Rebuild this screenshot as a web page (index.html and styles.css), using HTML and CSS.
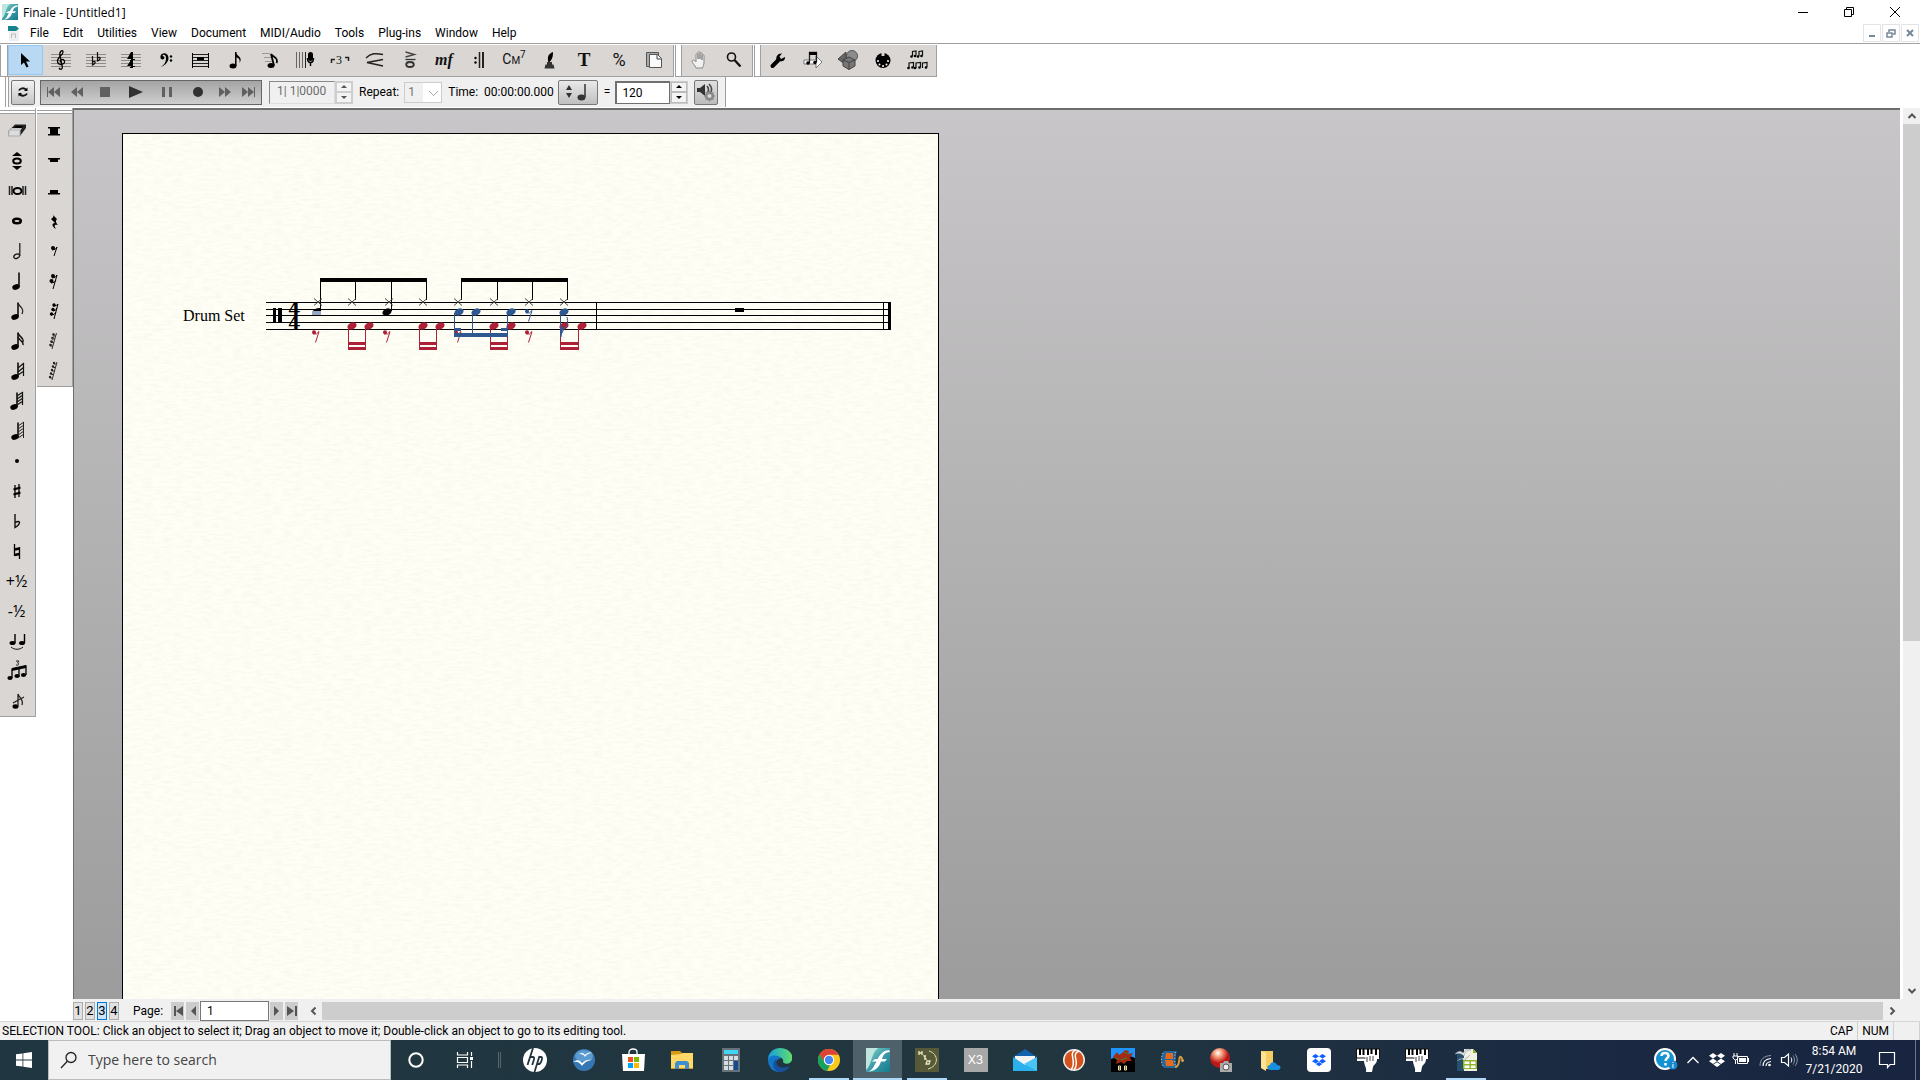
FILE: index.html
```html
<!DOCTYPE html>
<html lang="en">
<head>
<meta charset="utf-8">
<title>Finale - [Untitled1]</title>
<link rel="stylesheet" href="styles.css">
</head>
<body>
<svg class="defs" width="0" height="0" aria-hidden="true">
  <defs>
    <symbol id="head" viewBox="-6 -5 12 10" overflow="visible"><ellipse rx="4.8" ry="3.4" transform="rotate(-25)"/></symbol>
    <symbol id="cross" viewBox="-5 -5 10 10" overflow="visible"><path d="M-4-3.5 4 3.5M4-3.5-4 3.5" stroke="#444" fill="none"/></symbol>
    <symbol id="rest8" viewBox="0 0 8 13" overflow="visible"><circle cx="2" cy="2.3" r="2"/><path d="M1 4Q5 5 7 1.500L3.500 12.500" fill="none" stroke="currentColor"/></symbol>
    <symbol id="staff" viewBox="0 0 24 24"><path d="M2 6.500h20M2 9.500h20M2 12.500h20M2 15.500h20M2 18.500h20" stroke="#8d8a88" fill="none"/></symbol>
    <symbol id="note" viewBox="0 0 24 24"><ellipse cx="9" cy="18" rx="3.800" ry="2.700" transform="rotate(-20 9 18)"/><path d="M12 18V3.500" stroke="#000" stroke-width="1.500"/></symbol>
    <symbol id="dropbox" viewBox="0 0 16 16"><path d="M4 1 8 3.700 4 6.400 0 3.700zM12 1l4 2.700-4 2.700-4-2.700zM4 6.600 8 9.300 4 12 0 9.300zM12 6.600l4 2.700L12 12 8 9.300zM8 10.200l3.700 2.400L8 15l-3.700-2.400z"/></symbol>
    <linearGradient id="teal" x2="1" y2="1"><stop stop-color="#8ee0d0"/><stop offset=".5" stop-color="#3f9ba8"/><stop offset="1" stop-color="#147b91"/></linearGradient>
    <symbol id="finale" viewBox="0 0 24 24"><path fill="url(#teal)" d="M0 0h24v24H0z"/><path fill="#bfe6de" d="M0 0h12C5 5 6 17 0 22z"/><path fill="#fff" d="M2 24c9-3 8-21 21-22l1 2c-6 0-7 4-8 7h5l-2 2.500h-4c-2 6-5 9-13 10.500zM6 13.500l3-2.500h4l-1 2.500z"/></symbol>
    <symbol id="piano" viewBox="0 0 24 24"><path fill="#fff" d="M1 1h22v10h-2c0 5-3 5-4 8l-1 5h-6c1-4-2-7-2-11H1z"/><path d="M.500 1v9h9M.500 1h23v9" fill="none" stroke="#111"/><path d="M4 1v6M7.500 1v6M12 1v6M15.500 1v5M20 1v6" stroke="#000" stroke-width="2"/><path d="M11 9v5M14 8v5M17 8v5" stroke="#444"/></symbol>
  </defs>
</svg>

<div class="app">
  <header class="titlebar">
    <svg class="app-icon" viewBox="0 0 24 24"><use href="#finale"/></svg>
    <h1 class="app-title">Finale - [Untitled1]</h1>
    <div class="window-buttons">
      <button aria-label="Minimize"><svg viewBox="0 0 12 12"><path d="M1 6.500h10"/></svg></button>
      <button aria-label="Restore"><svg viewBox="0 0 12 12"><path d="M1.500 3.500h7v7h-7zM3.500 3V1.500h7v7H9"/></svg></button>
      <button aria-label="Close"><svg viewBox="0 0 12 12"><path d="M1 1l10 10M11 1 1 11"/></svg></button>
    </div>
  </header>

  <nav class="menubar">
    <svg class="doc-icon" viewBox="0 0 14 16"><path fill="#eee" d="M2 4h10v12H2z"/><path fill="#16818f" d="M1 1h8l3 2.500L9 6H1z"/><path d="M4.500 13V9h4v4" stroke="#bbb" fill="none"/></svg>
    <button>File</button><button>Edit</button><button>Utilities</button><button>View</button><button>Document</button><button>MIDI/Audio</button><button>Tools</button><button>Plug-ins</button><button>Window</button><button>Help</button>
    <div class="child-buttons">
      <button aria-label="Minimize document"><svg viewBox="0 0 10 10"><path d="M2 8h6"/></svg></button>
      <button aria-label="Restore document"><svg viewBox="0 0 10 10"><path d="M1 5h5v4H1zM3 4V2h6v4H7" fill="none" stroke-width="1.500"/></svg></button>
      <button aria-label="Close document"><svg viewBox="0 0 10 10"><path d="M2 2l6 6M8 2 2 8"/></svg></button>
    </div>
  </nav>

  <div class="toolbars">
    <div class="toolgroup" role="toolbar" aria-label="Main tools">
      <button class="tool selected" aria-label="Selection"><svg viewBox="0 0 24 24"><path d="M7 5v12l3-2.500 2.500 5 2-1-2.500-5h4z"/></svg></button>
      <button class="tool" aria-label="Staff"><svg viewBox="0 0 24 24"><use href="#staff"/><path d="M10 20c2 2.500 4 1 3.200-2L11 8c-1-5 3-7 3-4 0 4-6 5-5.500 9.500.5 4.500 8 3.500 7-.5-1-3-5-1.500-4 1.500" fill="none" stroke="#000" stroke-width="1.300"/></svg></button>
      <button class="tool" aria-label="Key signature"><svg viewBox="0 0 24 24"><use href="#staff"/><path d="M8.500 8v9c4-2 3-5 0-3M13.500 4v9c4-2 3-5 0-3" fill="none" stroke="#111" stroke-width="1.200"/></svg></button>
      <button class="tool" aria-label="Time signature"><svg viewBox="0 0 24 24"><use href="#staff"/><path d="M12 4h2v7h2v1h-2v1h-3v-1h1v-1H8zM12 12h2v6h2v1h-2v1h-3v-1h1v-1H8z"/></svg></button>
      <button class="tool" aria-label="Clef"><svg viewBox="0 0 24 24"><path d="M6.500 8c1-4 8-4 8 2 0 4-4 8-8 9 4-2 5.500-5 5.500-9 0-4-3.500-4-3.500-2 2.500 0 2.500 3.500 0 3.500-1.500 0-2.500-1.500-2-3.500"/><circle cx="17" cy="8.500" r="1.200"/><circle cx="17" cy="12.500" r="1.200"/></svg></button>
      <button class="tool" aria-label="Measure"><svg viewBox="0 0 24 24"><path d="M3.500 5v15M19.500 5v15" stroke="#000"/><path d="M4 6.500h15M4 9.500h15M4 12.500h15M4 15.500h15M4 18.500h15" stroke="#222"/><path d="M8 9h7v3H8z"/></svg></button>
      <button class="tool" aria-label="Simple entry"><svg viewBox="0 0 24 24"><ellipse cx="9" cy="18" rx="3.500" ry="2.500"/><path d="M11.800 18V4" stroke="#000" stroke-width="1.500"/><path d="M11.500 4c1 4 8 5 4 11 1-5-2-5-4-6z"/></svg></button>
      <button class="tool" aria-label="Speedy entry"><svg viewBox="0 0 24 24"><ellipse cx="12" cy="17.500" rx="3.500" ry="2.500"/><path d="M15 17.500 12 6c2 3 8 4 5.500 9" fill="none" stroke="#000" stroke-width="1.800"/><path d="M3 5.500h8M5 9.500h7M6 13.500h7" stroke="#999"/></svg></button>
      <button class="tool" aria-label="HyperScribe"><svg viewBox="0 0 24 24"><path d="M2.500 4v16M5.500 4v16M8.500 4v16" stroke="#666"/><path d="M11.500 4v16" stroke="#222"/><rect x="14" y="4" width="5" height="9" rx="2.500"/><path d="M13.500 10c0 6 6 6 6 0M16.500 14v4" fill="none" stroke="#000" stroke-width="1.500"/></svg></button>
      <button class="tool" aria-label="Tuplet"><svg viewBox="0 0 24 24"><path d="M2.500 15v-3.500H6M16 9.500h3.500V13" fill="none" stroke="#222" stroke-width="1.500"/></svg><span class="glyph tuplet">3</span></button>
      <button class="tool" aria-label="Smart shape"><svg viewBox="0 0 24 24"><path d="M2 10C7 5 12 5 19 6.500M19 11.500 3 14.500 19 18" fill="none" stroke="#222" stroke-width="1.500"/></svg></button>
      <button class="tool" aria-label="Articulation"><svg viewBox="0 0 24 24"><path d="M6.500 4l9 2.500-9 2.500" fill="none" stroke="#444" stroke-width="1.300"/><path d="M6.500 11.500h10" stroke="#333" stroke-width="1.300"/><ellipse cx="11" cy="16.500" rx="3.800" ry="2.500" fill="none" stroke="#333" stroke-width="1.800"/></svg></button>
      <button class="tool" aria-label="Expression"><span class="glyph dynamic">mf</span></button>
      <button class="tool" aria-label="Repeat"><svg viewBox="0 0 24 24"><path d="M10.500 4v16" stroke="#222" stroke-width="1.500"/><path d="M14 4v16" stroke="#222" stroke-width="2"/><circle cx="6.500" cy="10" r="1.200"/><circle cx="6.500" cy="14.500" r="1.200"/></svg></button>
      <button class="tool" aria-label="Chord"><span class="glyph chord">C<small>M</small><sup>7</sup></span></button>
      <button class="tool" aria-label="Lyrics"><svg viewBox="0 0 24 24"><path d="M14 4c-5 2-6 5-4.500 11 3.500-3 4.500-6 4.500-11z"/><path d="M8 14h5v2.500h1.500l1 4h-10l1-4H8z" fill="#333"/></svg></button>
      <button class="tool" aria-label="Text"><span class="glyph text-t">T</span></button>
      <button class="tool" aria-label="Resize"><span class="glyph percent">%</span></button>
      <button class="tool" aria-label="Page layout"><svg viewBox="0 0 24 24"><path d="M2.500 4.500h12v14h-12z" fill="#aaa" stroke="#555"/><path d="M5.500 6.500h8l4 4v9h-12z" fill="#fafafa" stroke="#555"/><path d="M13 6.500V11h4.500" fill="none" stroke="#444"/></svg></button>
    </div>
    <div class="toolgroup" role="toolbar" aria-label="Navigation tools">
      <button class="tool" aria-label="Hand grabber"><svg viewBox="0 0 24 24"><path d="M8 20c-1-3-4-5-4-7 1-2 3 0 4 1V7c0-2 1.800-2 2 0v4V5c0-2 2-2 2 0v6V6c0-2 2-2 2 0v6V8c0-2 2-2 2 0v6c0 3-1 4-1.500 6z" fill="#f1f1f1" stroke="#888"/></svg></button>
      <button class="tool" aria-label="Zoom"><svg viewBox="0 0 24 24"><circle cx="8.500" cy="9" r="4" fill="none" stroke="#111" stroke-width="1.600"/><path d="M11.500 12l6 6.500" stroke="#111" stroke-width="2.300"/></svg></button>
    </div>
    <div class="toolgroup" role="toolbar" aria-label="Advanced tools">
      <button class="tool" aria-label="Special tools"><svg viewBox="0 0 24 24"><path d="M5.500 18 11 12.500" stroke="#000" stroke-width="4" stroke-linecap="round"/><path d="M9.500 12c-1-4 2-7 5.500-6.500l-2.500 3 1.500 2.500 4-2c.5 4-4 6-8 3z"/></svg></button>
      <button class="tool" aria-label="Note mover"><svg viewBox="0 0 24 24"><path d="M2 12h12V8l6 6-6 6v-4H2z" fill="#fff" stroke="#777"/><path d="M7.500 15V4.500h7V14" fill="none" stroke="#222" stroke-width="1.300"/><path d="M7 4h8v3H7z"/><circle cx="6" cy="15" r="1.800"/><circle cx="13" cy="14.500" r="1.800"/></svg></button>
      <button class="tool" aria-label="Graphics"><svg viewBox="0 0 24 24"><circle cx="15" cy="8" r="5.500" fill="#8c8c8c" stroke="#555"/><path d="M1 11 9 4v13z" fill="#666" stroke="#444"/><path d="M6 12l6-3 6 3v6l-6 3.500-6-3.500z" fill="#777" stroke="#444"/><path d="M6 12l6 2.500 6-2.500M12 14.500v7" stroke="#444" fill="none"/></svg></button>
      <button class="tool" aria-label="MIDI"><svg viewBox="0 0 24 24"><circle cx="11" cy="12.500" r="7.500"/><path d="M9.500 4h3v4h-3z" fill="#d9d6d3"/><g fill="#fff"><circle cx="6" cy="13" r="1"/><circle cx="7.500" cy="16.500" r="1"/><circle cx="11" cy="18" r="1"/><circle cx="14.500" cy="16.500" r="1"/><circle cx="16" cy="13" r="1"/></g></svg></button>
      <button class="tool" aria-label="Ossia"><svg viewBox="0 0 24 24"><g fill="none" stroke="#111" stroke-width="1.200"><path d="M5.500 8V3.500L9 3v4.500M12 8V3.500l3.500-.5v4.500M2 20v-5l4.500-.5V19M9 20v-5l4.500-.5V19M15.500 20v-5l4.500-.5V19"/></g><g><circle cx="4.500" cy="8.500" r="1.300"/><circle cx="8" cy="8" r="1.300"/><circle cx="11" cy="8.500" r="1.300"/><circle cx="14.500" cy="8" r="1.300"/><circle cx="1.500" cy="20" r="1.300"/><circle cx="5.500" cy="19.500" r="1.300"/><circle cx="8" cy="20" r="1.300"/><circle cx="12.500" cy="19.500" r="1.300"/><circle cx="19" cy="19.500" r="1.300"/></g></svg></button>
    </div>
  </div>

  <div class="playback">
    <button class="square-button" aria-label="Playback options"><svg viewBox="0 0 16 16"><path d="M4 6.500c1-2.500 5-3 7-1M12 9.500c-1 2.500-5 3-7 1" fill="none" stroke="#111" stroke-width="1.800"/><path d="M12.500 3.500v3.500H9zM3.500 12.500V9H7z"/></svg></button>
    <div class="transport">
      <button aria-label="To beginning"><svg viewBox="0 0 14 12"><path d="M1 1h1v10H1zM8 1v10L2 6zM14 1v10L8 6z"/></svg></button>
      <button aria-label="Rewind"><svg viewBox="0 0 14 12"><path d="M7 1v10L1 6zM13 1v10L7 6z"/></svg></button>
      <button class="wide" aria-label="Stop"><svg viewBox="0 0 14 12"><path d="M2 1h10v10H2z"/></svg></button>
      <button class="wide dark" aria-label="Play"><svg viewBox="0 0 14 12"><path d="M0 0l14 6-14 6z"/></svg></button>
      <button class="wide" aria-label="Pause"><svg viewBox="0 0 14 12"><path d="M2 1h3v10H2zM9 1h3v10H9z"/></svg></button>
      <button class="wide dark" aria-label="Record"><svg viewBox="0 0 14 12"><circle cx="7" cy="6" r="5"/></svg></button>
      <button aria-label="Fast forward"><svg viewBox="0 0 14 12"><path d="M1 1l6 5-6 5zM7 1l6 5-6 5z"/></svg></button>
      <button aria-label="To end"><svg viewBox="0 0 14 12"><path d="M0 1l6 5-6 5zM6 1l6 5-6 5zM12 1h1v10h-1z"/></svg></button>
    </div>
    <div class="spinner counter">
      <input type="text" value="1| 1|0000" aria-label="Counter" disabled>
      <div class="spin"><button aria-label="Counter up"></button><button aria-label="Counter down"></button></div>
    </div>
    <label for="repeat">Repeat:</label>
    <select id="repeat" disabled><option>1</option></select>
    <span class="time-label">Time:</span>
    <output class="time">00:00:00.000</output>
    <button class="beat" aria-label="Beat unit"><svg viewBox="0 0 28 20"><path d="M5 3l3 5H2zM5 16l3-5H2z" fill="#333"/><ellipse cx="17.500" cy="15.500" rx="4" ry="3" fill="#333"/><path d="M21 15V2" stroke="#333" stroke-width="1.500"/></svg></button>
    <label for="tempo">=</label>
    <div class="spinner tempo">
      <input id="tempo" type="text" value="120">
      <div class="spin"><button aria-label="Tempo up"></button><button aria-label="Tempo down"></button></div>
    </div>
    <button class="square-button audio" aria-label="Playback settings"><svg viewBox="0 0 20 20"><path d="M1 6h3l5-4v12l-5-4H1z" fill="#333"/><path d="M11 4c2 2 2 5 0 7M13 2c3 3 3 7 1 10" fill="none" stroke="#444" stroke-width="1.500"/><circle cx="13.500" cy="14" r="3.500" fill="none" stroke="#888" stroke-width="2.500"/><path d="M13.500 8.500v11M8 14h11M9.500 10l8 8M17.500 10l-8 8" stroke="#888"/><circle cx="13.500" cy="14" r="1.800" fill="#ddd"/></svg></button>
  </div>

  <main class="main">
    <aside class="palettes">
      <div class="palette" role="toolbar" aria-label="Simple entry palette">
        <button aria-label="Eraser"><svg viewBox="0 0 24 24"><path d="M10 5.500h11v3.500l-6 8H4l-.5-5z" fill="#222"/><path d="M11 7h7l-3.500 4H7z" fill="#000"/><path d="M4 11.500h11V17H3.500z" fill="#ddd" stroke="#aaa"/><path d="M6.500 9h10.500l-2 3H4z" fill="#c8c8c8"/></svg></button>
        <button aria-label="Repitch"><svg viewBox="0 0 24 24"><path d="M12 3l5 4H7zM12 21l5-4H7z"/><ellipse cx="12" cy="12" rx="3.800" ry="2.500" fill="none" stroke="#000" stroke-width="2"/></svg></button>
        <button aria-label="Double whole note"><svg viewBox="0 0 24 24"><path d="M4.500 7v9M7 7v9M18 7v9M20.500 7v9" stroke="#222" stroke-width="1.500"/><ellipse cx="12.500" cy="12" rx="4" ry="3" fill="none" stroke="#000" stroke-width="2"/></svg></button>
        <button aria-label="Whole note"><svg viewBox="0 0 24 24"><ellipse cx="12" cy="12" rx="3.800" ry="2.300" fill="none" stroke="#000" stroke-width="2.500"/></svg></button>
        <button aria-label="Half note"><svg viewBox="0 0 24 24"><ellipse cx="11.500" cy="17.500" rx="3" ry="2" fill="none" stroke="#111" stroke-width="1.300" transform="rotate(-25 11 17)"/><path d="M14.800 17V4" stroke="#222" stroke-width="1.300"/></svg></button>
        <button aria-label="Quarter note"><svg viewBox="0 0 24 24"><use href="#note" x="2"/></svg></button>
        <button aria-label="Eighth note"><svg viewBox="0 0 24 24"><use href="#note" x="1"/><path d="M13 4c1 4 7 5 4 11" fill="none" stroke="#222" stroke-width="1.300"/></svg></button>
        <button aria-label="Sixteenth note"><svg viewBox="0 0 24 24"><use href="#note" x="1"/><path d="M13 4c1 4 6 4 5 9M13 8c1 4 6 4 5 8" fill="none" stroke="#111" stroke-width="1.400"/></svg></button>
        <button aria-label="Thirty-second note"><svg viewBox="0 0 24 24"><use href="#note" x="1"/><path d="M19 4l-6 5M19 8l-6 5M19 12l-6 4M18.500 4v13" fill="none" stroke="#111" stroke-width="1.200"/></svg></button>
        <button aria-label="Sixty-fourth note"><svg viewBox="0 0 24 24"><use href="#note"/><path d="M18 3l-6 4M18 6l-6 4M18 9l-6 4M18 12l-6 4M17.500 3v13" fill="none" stroke="#111" stroke-width="1.200"/></svg></button>
        <button aria-label="128th note"><svg viewBox="0 0 24 24"><use href="#note" x="1"/><path d="M19 3l-6 4M19 6l-6 4M19 9l-6 4M19 12l-6 4M19 15l-6 4M18.500 3v16" fill="none" stroke="#222"/></svg></button>
        <button aria-label="Dot"><svg viewBox="0 0 24 24"><circle cx="12" cy="12" r="2"/></svg></button>
        <button aria-label="Sharp"><svg viewBox="0 0 24 24"><path d="M10 6v13M14 5v13" stroke="#000" stroke-width="1.300"/><path d="M8.500 10.500l7-2M8.500 15.500l7-2" stroke="#000" stroke-width="2.200"/></svg></button>
        <button aria-label="Flat"><svg viewBox="0 0 24 24"><path d="M10 5v13.500c6-4 6-8 0-5" fill="none" stroke="#111" stroke-width="1.400"/></svg></button>
        <button aria-label="Natural"><svg viewBox="0 0 24 24"><path d="M9.500 5v12M14.500 8v12" stroke="#000" stroke-width="1.300"/><path d="M9.500 10.500l5-1M9.500 16l5-1" stroke="#000" stroke-width="2.500"/></svg></button>
        <button><span class="half">+½</span></button>
        <button><span class="half">-½</span></button>
        <button aria-label="Tie"><svg viewBox="0 0 24 24"><ellipse cx="7.500" cy="14" rx="3" ry="2"/><ellipse cx="17" cy="14" rx="3" ry="2"/><path d="M10 14V5M19.500 14V5" stroke="#000" stroke-width="1.400"/><path d="M6 18c3 3 9 3 12 0" fill="none" stroke="#111"/></svg></button>
        <button aria-label="Tuplet"><svg viewBox="0 0 24 24"><path d="M7 19v-9l14-3v9M14 18V9" stroke="#000" stroke-width="1.300" fill="none"/><path d="M7 9l14-3v3L7 12z"/><ellipse cx="5" cy="19" rx="2.600" ry="2"/><ellipse cx="12" cy="17" rx="2.600" ry="2"/><ellipse cx="18.500" cy="16" rx="2.600" ry="2"/><path d="M11 2h3l-1.500 2c2 0 1.500 3-1.500 2" fill="none" stroke="#222"/></svg></button>
        <button aria-label="Grace note"><svg viewBox="0 0 24 24"><ellipse cx="10.500" cy="17.500" rx="3" ry="2.200"/><path d="M13 17V5c1 4 6 5 4 11M8 14l11-6" fill="none" stroke="#222" stroke-width="1.300"/></svg></button>
      </div>
      <div class="palette" role="toolbar" aria-label="Simple entry rests palette">
        <button aria-label="Double whole rest"><svg viewBox="0 0 24 24"><path d="M6 8h12v1.500H6zM6 15h12v1.500H6zM8 9h8v6.500H8z"/></svg></button>
        <button aria-label="Whole rest"><svg viewBox="0 0 24 24"><path d="M6 9h12v1.500H6zM8 10h8v3H8z"/></svg></button>
        <button aria-label="Half rest"><svg viewBox="0 0 24 24"><path d="M6 14h12v1.500H6zM8 11h8v3H8z"/></svg></button>
        <button aria-label="Quarter rest"><svg viewBox="0 0 24 24"><path d="M10 5l5 5c-2 2-1 4 1 6-4-1-4 1-2 4-5-3-4-6-1-6l-4-4c3-2 3-3 1-5z"/></svg></button>
        <button aria-label="Eighth rest"><svg viewBox="0 0 24 24"><circle cx="11" cy="9" r="2"/><path d="M10 11q4 0 5-3l-3 9" fill="none" stroke="#000"/></svg></button>
        <button aria-label="Sixteenth rest"><svg viewBox="0 0 24 24"><circle cx="11" cy="7" r="2"/><circle cx="9.500" cy="12" r="2"/><path d="M10 9q4 0 5-3l-4 14M9 14q4 0 5-3" fill="none" stroke="#000"/></svg></button>
        <button aria-label="Thirty-second rest"><svg viewBox="0 0 24 24"><circle cx="12" cy="6" r="1.700"/><circle cx="11" cy="10.500" r="1.700"/><circle cx="9.500" cy="15" r="1.700"/><path d="M11 7q4 0 5-2l-4 15M11 12q3 0 4-3M9 16q4 0 5-3" fill="none" stroke="#000"/></svg></button>
        <button aria-label="Sixty-fourth rest"><svg viewBox="0 0 24 24"><g fill="#222"><circle cx="11.500" cy="5.500" r="1.300"/><circle cx="10.500" cy="9" r="1.300"/><circle cx="9.500" cy="12.500" r="1.300"/><circle cx="8.500" cy="16" r="1.300"/></g><path d="M11 7h3M10 10h3M9 13.500h3M8 17h3M14.500 4 10 20" fill="none" stroke="#333"/></svg></button>
        <button aria-label="128th rest"><svg viewBox="0 0 24 24"><g fill="#222"><circle cx="12" cy="4" r="1.200"/><circle cx="11" cy="7.500" r="1.200"/><circle cx="10" cy="11" r="1.200"/><circle cx="9" cy="14.500" r="1.200"/><circle cx="8" cy="18" r="1.200"/></g><path d="M12 5h3M11 8.500h3M10 12h3M9 15.500h3M8 19h2M15 3l-5 18" fill="none" stroke="#333"/></svg></button>
      </div>
    </aside>

    <section class="document">
      <div class="canvas">
        <div class="page">
          <svg class="paper" aria-hidden="true"><filter id="grain" x="0" y="0" width="100%" height="100%"><feTurbulence type="fractalNoise" baseFrequency=".1 .4" numOctaves="3" seed="4"/><feColorMatrix values="0 0 0 0 .8  0 0 0 0 .78  0 0 0 0 .62  .5 0 0 0 -.17"/></filter><rect width="100%" height="100%" filter="url(#grain)"/></svg>
          <div class="system">
            <span class="instrument">Drum Set</span>
            <svg class="score" viewBox="266 270 630 90" role="img" aria-label="Drum set part, two measures in four four">
              <path d="M266 302.500h622M266 309.500h622M266 315.500h622M266 322.500h622M266 329.500h622M596.500 302v28M883.500 302v28" stroke="#000" fill="none"/>
              <path d="M888 302h3v28h-3zM735 308h9v4h-9zM273 308h3v15h-3zM278 308h4v15h-4z"/>
              <text x="288" y="316" class="meter">4</text><text x="288" y="330" class="meter">4</text>
              <path d="M320 278h107v4H320zM461 278h107v4H461z"/>
              <path d="M320.500 280v31M355.500 280v20M391.500 280v31M426.500 280v20M461.500 280v20M497.500 280v20M532.500 280v20M567.500 280v20" stroke="#000"/>
              <use href="#cross" x="313" y="297" width="10" height="10"/><use href="#cross" x="347" y="297" width="10" height="10"/><use href="#cross" x="384" y="297" width="10" height="10"/><use href="#cross" x="418" y="297" width="10" height="10"/><use href="#cross" x="453" y="297" width="10" height="10"/><use href="#cross" x="489" y="297" width="10" height="10"/><use href="#cross" x="524" y="297" width="10" height="10"/><use href="#cross" x="559" y="297" width="10" height="10"/>
              <path d="M313 312c0-3 3-4 8-4v4z"/><path d="M312 311h9v4h-9z" fill="#93a6c6"/>
              <use href="#head" x="381" y="307" width="12" height="10"/>
              <g fill="#ad2138" color="#ad2138">
                <use href="#head" x="346" y="321" width="12" height="10"/><use href="#head" x="363" y="321" width="12" height="10"/><use href="#head" x="417" y="321" width="12" height="10"/><use href="#head" x="434" y="321" width="12" height="10"/><use href="#head" x="488" y="321" width="12" height="10"/><use href="#head" x="505" y="321" width="12" height="10"/><use href="#head" x="558" y="321" width="12" height="10"/><use href="#head" x="576" y="321" width="12" height="10"/>
                <path d="M348.500 327v22M365.500 327v22M419.500 327v22M436.500 327v22M490.500 327v22M507.500 327v22M560.500 327v22M578.500 327v22" stroke="#ad2138"/>
                <path d="M348 342h18v3h-18zM348 347h18v3h-18zM419 342h18v3h-18zM419 347h18v3h-18zM490 342h18v3h-18zM490 347h18v3h-18zM560 342h19v3h-19zM560 347h19v3h-19z"/>
                <use href="#rest8" x="312" y="330" width="8" height="13"/><use href="#rest8" x="383" y="330" width="8" height="13"/><use href="#rest8" x="454" y="330" width="8" height="13"/><use href="#rest8" x="525" y="330" width="8" height="13"/>
              </g>
              <g fill="#2f5790" color="#2f5790">
                <use href="#head" x="453" y="307" width="12" height="10"/><use href="#head" x="470" y="307" width="12" height="10"/><use href="#head" x="505" y="307" width="12" height="10"/><use href="#head" x="558" y="307" width="12" height="10"/>
                <path d="M454.500 313v22M472.500 313v22M507.500 313v22M560.500 313v24M561 337c0-8 9-10 6-20" stroke="#2f5790" fill="none"/>
                <path d="M454 333h54v4h-54zM454 328h7v3h-7zM501 328h7v3h-7zM561 336v-8l3-2z"/>
                <use href="#rest8" x="525" y="309" width="8" height="13"/>
              </g>
            </svg>
          </div>
        </div>
      </div>
      <div class="vscroll"><button class="up" aria-label="Scroll up"><svg viewBox="0 0 10 10"><path d="M1.500 7 5 3.500 8.500 7"/></svg></button><div class="vthumb"></div><button class="down" aria-label="Scroll down"><svg viewBox="0 0 10 10"><path d="M1.500 3 5 6.500 8.500 3"/></svg></button></div>
    </section>
  </main>

  <div class="pagebar">
    <div class="layers"><button>1</button><button>2</button><button class="current">3</button><button>4</button></div>
    <label for="page">Page:</label>
    <button class="nav" aria-label="First page"><svg viewBox="0 0 10 12"><path d="M1 1h2v10H1zM10 1v10L3 6z"/></svg></button>
    <button class="nav" aria-label="Previous page"><svg viewBox="0 0 10 12"><path d="M8 1v10L3 6z"/></svg></button>
    <input id="page" type="text" value="1">
    <button class="nav" aria-label="Next page"><svg viewBox="0 0 10 12"><path d="M2 1v10l5-5z"/></svg></button>
    <button class="nav" aria-label="Last page"><svg viewBox="0 0 10 12"><path d="M8 1h2v10H8zM0 1v10l7-5z"/></svg></button>
    <div class="hscroll"><button aria-label="Scroll left"><svg viewBox="0 0 10 10"><path d="M6.500 1.500 3 5l3.500 3.500"/></svg></button><div class="hthumb"></div><button aria-label="Scroll right"><svg viewBox="0 0 10 10"><path d="M3.500 1.500 7 5 3.500 8.500"/></svg></button></div>
  </div>

  <footer class="statusbar">
    <span class="hint">SELECTION TOOL: Click an object to select it; Drag an object to move it; Double-click an object to go to its editing tool.</span>
    <span class="key">CAP</span><span class="key">NUM</span><span class="key last"></span>
  </footer>

  <div class="taskbar">
    <button class="start" aria-label="Start"><svg viewBox="0 0 16 16" width="16" height="16" fill="#fff"><path d="M0 2.300 6.500 1.400v6.100H0zM7.300 1.300 16 0v7.500H7.300zM0 8.400h6.500v6.200L0 13.700zM7.300 8.400H16V16l-8.700-1.300z"/></svg></button>
    <label class="search"><svg viewBox="0 0 18 18" width="18" height="18"><circle cx="11" cy="6.500" r="5" fill="none" stroke="#222" stroke-width="1.300"/><path d="M7.300 10.300 1 17" stroke="#222" stroke-width="1.300"/></svg><input type="text" placeholder="Type here to search" aria-label="Search"></label>
    <button class="task" aria-label="Cortana"><svg viewBox="0 0 24 24"><circle cx="12" cy="12" r="6.700" fill="none" stroke="#fff" stroke-width="2"/></svg></button>
    <button class="task" aria-label="Task view"><svg viewBox="0 0 24 24"><path d="M4.500 4v3h10V4M4.500 20v-3h10v3M4.500 9.500h10v5h-10zM18.500 4v4M18.500 13v7" fill="none" stroke="#fff" stroke-width="1.200"/><path d="M17 9h3v3h-3z" fill="#fff"/></svg></button>
    <span class="separator"></span>
    <button class="task" aria-label="HP"><svg viewBox="0 0 24 24"><circle cx="12" cy="12" r="12" fill="#fff"/><path d="M10 0 4.500 17M7.500 9h2.500c1.500 0 1.200 1.500.8 3l-1.600 5M16.500 8l-5 16M16.500 9H18c1.500 0 1.200 1.500.6 3.500S17.500 16 16 16h-2" fill="none" stroke="#21343d" stroke-width="1.800"/></svg></button>
    <button class="task" aria-label="OpenOffice"><svg viewBox="0 0 24 24"><circle cx="12" cy="12" r="11" fill="#3577b5"/><ellipse cx="12" cy="8" rx="9" ry="6" fill="#5b9bd0"/><path d="M7 6c3-2 5-1 6 1 2-2 4-3 7-2-3 0-5 1-7 4-1-2-2-3-6-3zM1 14c4-3 7-2 9 1 3-3 7-4 11-3-5 0-8 2-11 6-2-3-4-5-9-4z" fill="#fff"/></svg></button>
    <button class="task" aria-label="Microsoft Store"><svg viewBox="0 0 24 24"><path d="M8 7V4c0-4 8-4 8 0v3" fill="none" stroke="#fff" stroke-width="1.300"/><path d="M1 6h23l-1 17H2z" fill="#fff"/><path d="M7 9h5v5H7z" fill="#f25022"/><path d="M13 9h5v5h-5z" fill="#7fba00"/><path d="M7 15h5v5H7z" fill="#00a4ef"/><path d="M13 15h5v5h-5z" fill="#ffb900"/></svg></button>
    <button class="task" aria-label="File Explorer"><svg viewBox="0 0 24 24"><path d="M1 3h9l2 2h11v16H1z" fill="#d89a16"/><path d="M1 7l10-1 2-1h10v15H1z" fill="#ffd868"/><path d="M5 21v-6l2-2h10l2 2v6h-4v-4H9v4z" fill="#3e8fd0"/></svg></button>
    <button class="task" aria-label="Calculator"><svg viewBox="0 0 24 24"><path d="M3 0h18v24H3z" fill="#66717a"/><path d="M5 2h14v4H5z" fill="#40d5f5"/><path d="M5 8h4v4H5zM10 8h4v4h-4zM15 8h4v4h-4zM5 13h4v4H5zM10 13h4v4h-4zM5 18h4v4H5zM10 18h4v4h-4z" fill="#d5dde2"/><path d="M15 13h4v9h-4z" fill="#134b91"/></svg></button>
    <button class="task" aria-label="Edge"><svg viewBox="0 0 24 24"><defs><linearGradient id="edge"><stop stop-color="#169ee0"/><stop offset="1" stop-color="#62df6a"/></linearGradient></defs><path d="M0 12C0 5 5 0 12 0c8 0 14 6 12 12-1 4-7 5-9 2 2-5-8-8-15-2z" fill="url(#edge)"/><path d="M0 12c0 7 5 12 11 12-6-4-5-12 2-14C9 6 1 7 0 12z" fill="#1377c6"/><path d="M9 11c-3 7 4 11 13 7-3 5-7 6-11 6-6-1-8-11-2-13z" fill="#17519e"/></svg></button>
    <button class="task open" aria-label="Chrome"><svg viewBox="0 0 24 24"><circle cx="12" cy="12" r="11" fill="#fbc91b"/><path d="M2.500 6.500A11 11 0 0 1 21.600 6.700H12L7 14z" fill="#db4437"/><path d="M2.500 6.500 8 15l5 2-3 6A11 11 0 0 1 2.500 6.500z" fill="#18a05e"/><circle cx="12" cy="12" r="5.200" fill="#fff"/><circle cx="12" cy="12" r="4.200" fill="#4587f3"/></svg></button>
    <button class="task open active" aria-label="Finale"><svg viewBox="0 0 24 24"><use href="#finale"/></svg></button>
    <button class="task open" aria-label="HSO"><svg viewBox="0 0 24 24"><path d="M0 0h24v24H0z" fill="#565a38"/><path d="M14 3c10 3 10 15-1 18" fill="none" stroke="#dfe0a0"/><path d="M4 3v4M7 3v4M4 5h3M11 8H9l2 3H9M12 13h3l-1 3h-3z" fill="none" stroke="#e6e7b8" stroke-width="1.300"/></svg></button>
    <button class="task" aria-label="X3"><span class="x3">X3</span></button>
    <button class="task" aria-label="Mail"><svg viewBox="0 0 24 24"><path d="M0 9 12 1l12 8z" fill="#1462ad"/><path d="M2 8h20v10H2z" fill="#f3f3f3"/><path d="M0 9v14h24V9L12 17z" fill="#2bb0ee"/><path d="M24 9v14L11 16z" fill="#48c4f6"/></svg></button>
    <button class="task" aria-label="SmartScore"><svg viewBox="0 0 24 24"><circle cx="12" cy="12" r="11" fill="#eee"/><circle cx="12" cy="12" r="9.500" fill="#d4521c"/><path d="M14 2C5 5 16 13 9 22M17 3C8 7 19 13 12 22" fill="none" stroke="#fff" stroke-width="1.500"/></svg></button>
    <button class="task" aria-label="Band-in-a-Box"><svg viewBox="0 0 24 24"><path d="M0 0h24v24H0z"/><path d="M0 0h24v10l-5-2-6 2-5-2-8 3z" fill="#1f95ff"/><path d="M2 9l4-5 2 3 3-2 3-3 4 1-1 3 5-1-3 5 2 3-5 0-3 3-3-2-5 2 1-4z" fill="#a52a15"/><path d="M4 10l4 1M13 4l5 2M10 12l6-2" stroke="#2b8c22"/><path d="M7.500 22v-4h2v4zM7.500 20h2M13.500 22v-4h2v4zM13.500 20h2" fill="none" stroke="#f2e6a0"/></svg></button>
    <button class="task" aria-label="Movie editor"><svg viewBox="0 0 24 24"><path d="M4 3h13c-2 5-2 12 0 17H4C0 16 0 7 4 3z" fill="#25659a"/><path d="M6 5h7v6H5zM5 12h8l1 6H6z" fill="#e36b1d"/><path d="M3 5c-2 4-2 9 0 13M15.500 4c-1 4-1 11 0 15" fill="none" stroke="#b8d0df" stroke-dasharray="1 2"/><path d="M15 19c6 0 3-12 6-10s-1 6 3 3" fill="none" stroke="#d59a43" stroke-width="2"/></svg></button>
    <button class="task" aria-label="Screen capture"><svg viewBox="0 0 24 24"><defs><radialGradient id="ball" cx=".4" cy=".25"><stop stop-color="#fff"/><stop offset=".4" stop-color="#f5a27e"/><stop offset="1" stop-color="#bd1717"/></radialGradient></defs><circle cx="11" cy="10" r="10" fill="url(#ball)"/><path d="M11 15h3l1-2h4l1 2h3v9H11z" fill="#aaa"/><circle cx="17" cy="19" r="3" fill="#eee" stroke="#555"/></svg></button>
    <button class="task" aria-label="OneDrive folder"><svg viewBox="0 0 24 24"><path d="M3 3h12v18H4z" fill="#f3cc62"/><path d="M3 3l5 2v18l-5-3z" fill="#ffe394"/><path d="M12 22c-4-1-3-5 0-5 1-4 6-3 7 0 5 0 4 5 1 5z" fill="#198fe0"/></svg></button>
    <button class="task" aria-label="Dropbox"><svg viewBox="0 0 24 24"><rect width="24" height="24" rx="4" fill="#fff"/><use href="#dropbox" x="5" y="5" width="14" height="14" fill="#0d62fe"/></svg></button>
    <button class="task" aria-label="Piano one"><svg viewBox="0 0 24 24"><use href="#piano"/></svg></button>
    <button class="task" aria-label="Piano two"><svg viewBox="0 0 24 24"><use href="#piano"/></svg></button>
    <button class="task open" aria-label="OpenOffice Calc"><svg viewBox="0 0 24 24"><path d="M3 6h10v17H3z" fill="#26516c"/><path d="M10 1h9l4 4v18H10z" fill="#f2f2e4"/><path d="M19 1v4h4" fill="#8ab221"/><path d="M1 6c4-4 6-3 8-1 3-5 6-4 8-3-4 0-6 2-7 6C7 5 5 5 1 6zM3 13c4-4 6-2 7 0l6-6" fill="#dce3e6" stroke="#889" stroke-width=".5"/><path d="M9 12h14v9H9z" fill="#91b52c"/><path d="M10.500 13.500h5v2.500h-5zM17 13.500h4.500v2.500H17zM10.500 17.500h5V20h-5zM17 17.500h4.500V20H17z" fill="#fff"/></svg></button>

    <div class="tray">
      <button class="help" aria-label="Support"><svg viewBox="0 0 24 24" width="24" height="24"><circle cx="11" cy="11" r="10" fill="#1493d2" stroke="#fff" stroke-width="2"/><path d="M7.500 8c0-4 7-4 7 0 0 2-3 2-3 5M11.500 15v2.500" fill="none" stroke="#fff" stroke-width="2.500"/><circle cx="19" cy="17" r="4.500" fill="#1687cf"/><path d="M19 14v1M19 16v4" stroke="#fff"/></svg></button>
      <button aria-label="Hidden icons"><svg viewBox="0 0 16 16" width="16" height="16"><path d="M2.500 11 8 5.500 13.500 11" fill="none" stroke="#fff" stroke-width="1.300"/></svg></button>
      <button aria-label="Dropbox"><svg viewBox="0 0 16 16" width="16" height="16"><use href="#dropbox" fill="#fff"/></svg></button>
      <button aria-label="Battery"><svg viewBox="0 0 18 16" width="18" height="16"><path d="M5.500 4.500h10v7h-10z" fill="none" stroke="#fff"/><path d="M7 6h7v4H7zM16 6h1v4h-1z" fill="#fff"/><path d="M2 1v3M5 1v3M1 4h5v2L4 8H3L1 6zM3.500 8v4" fill="none" stroke="#fff"/></svg></button>
      <button aria-label="Network"><svg viewBox="0 0 16 16" width="16" height="16"><path d="M3 14C3 7 7 4 14 3.500" fill="none" stroke="#8b98a8"/><path d="M6 14c0-4 3-7 8-7.500M9 14c0-3 2-4 5-4.500" fill="none" stroke="#fff" stroke-width="1.200"/><circle cx="12.500" cy="13" r="1.300" fill="#fff"/></svg></button>
      <button aria-label="Volume"><svg viewBox="0 0 18 16" width="18" height="16"><path d="M1.500 5.500h3l4-3.500v12l-4-3.500h-3z" fill="none" stroke="#fff" stroke-width="1.200"/><path d="M11 5.500c1 1.500 1 3.500 0 5" fill="none" stroke="#fff"/><path d="M13 3.500c2 3 2 6 0 9M15 2c3 4 3 8 0 12" fill="none" stroke="#8793a7"/></svg></button>
      <div class="clock"><span>8:54 AM</span><span>7/21/2020</span></div>
      <button class="notify" aria-label="Notifications"><svg viewBox="0 0 18 18" width="18" height="18"><path d="M1.500 1.500h15v12H12l-2.500 3v-3h-8z" fill="none" stroke="#fff" stroke-width="1.200"/></svg></button>
      <button class="show-desktop" aria-label="Show desktop"></button>
    </div>
  </div>
</div>
</body>
</html>
```
FILE: styles.css
```css
* { box-sizing: border-box; }
body { margin: 0; background: #fff; color: #000; font: 12px/16px Roboto, "Open Sans", sans-serif; }
button { margin: 0; padding: 0; border: 0; background: none; color: inherit; font: inherit; }
input, select { margin: 0; font: inherit; border-radius: 0; }
svg { display: block; }
.defs { position: absolute; }

.app { display: flex; flex-direction: column; height: 100vh; min-width: 1200px; overflow: hidden; }

/* Title bar and menus */
.titlebar { display: flex; align-items: center; height: 24px; flex: none; padding-left: 2px; }
.app-icon { width: 16px; height: 16px; }
.app-title { flex: 1; margin: 0; padding: 1px 0 0 5px; font: 12px/16px "Open Sans", sans-serif; }
.window-buttons { display: flex; height: 20px; padding-right: 2px; }
.window-buttons button { width: 46px; display: grid; place-items: center; }
.window-buttons svg { width: 12px; height: 12px; fill: none; stroke: #000; }

.menubar { display: flex; align-items: center; height: 20px; flex: none; padding: 0 0 1px 7px; border-bottom: 1px solid #a0a0a0; }
.doc-icon { width: 14px; height: 16px; margin-right: 2px; }
.menubar > button { padding: 0 7px 1px; }
.child-buttons { display: flex; gap: 1px; margin-left: auto; padding-right: 1px; }
.child-buttons button { display: grid; place-items: center; width: 18px; height: 18px; border: 1px solid #e3e3e3; }
.child-buttons svg { width: 10px; height: 10px; stroke: #74889a; stroke-width: 2; }

/* Tool rows */
.toolbars { display: flex; height: 33px; flex: none; padding-top: 1px; }
.toolgroup { display: flex; margin-right: 1px; background: #d9d6d3; border: solid #a0a0a0; border-width: 0 1px 1px 0; }
.toolgroup::before { content: ""; width: 5px; background: #fff; border: solid #a0a0a0; border-width: 0 1px; }
.toolgroup:first-child::before { width: 6px; }
.tool { position: relative; display: grid; place-items: center; width: 35px; height: 30px; border: 1px solid transparent; }
.tool.selected { background: #b8d8f4; border-color: #90c8f6; }
.tool svg { width: 24px; height: 24px; }
.glyph { color: #111; line-height: 24px; padding-right: 3px; }
.tuplet { position: absolute; top: 2px; left: 12px; font: 12px/24px "Liberation Serif", serif; }
.dynamic { font: italic bold 16px/24px "Liberation Serif", serif; }
.chord { font-size: 14px; white-space: nowrap; }
.chord small { font-size: 10px; }
.chord sup { font-size: 10px; line-height: 8px; }
.text-t { font: bold 19px/24px "Liberation Serif", serif; }
.percent { font-size: 18px; }

.playback { display: flex; align-items: center; align-self: flex-start; height: 30px; margin-bottom: 1px; flex: none; padding: 0 7px 0 11px; background: #f0f0f0; border-right: 1px solid #a0a0a0; box-shadow: inset 5px 0 #fff, inset 6px 0 #a0a0a0, inset 8px 0 #fff, inset 9px 0 #a0a0a0; }
.square-button { display: grid; place-items: center; width: 24px; height: 25px; border: 1px solid #777; border-radius: 2px; background: linear-gradient(#f3f3f3, #c4c4c4); }
.square-button svg { width: 16px; height: 16px; }
.audio { margin-left: 6px; background: linear-gradient(#e0e0e0, #bcbcbc); }
.audio svg { width: 20px; height: 20px; }
.transport { display: flex; align-items: center; height: 25px; margin: 0 7px 0 5px; border: 1px solid #666; background: linear-gradient(#a4a4a4, #cecece); fill: #606060; }
.transport button { display: grid; place-items: center; width: 24px; height: 23px; }
.transport .wide { width: 31px; }
.transport .dark { fill: #303030; }
.transport svg { width: 14px; height: 12px; }
.spinner { display: flex; height: 23px; }
.spinner input { border: 1px solid #707070; height: 23px; background: #fff; }
.counter input { width: 66px; padding: 0 0 2px 7px; border-color: #888 #ddd #ddd #888; background: #f0f0f0; color: #6d6d6d; }
.tempo input { width: 55px; padding: 0 0 0 5px; border-width: 2px 1px 1px 2px; }
.spin { display: grid; width: 18px; border: 1px solid #ccc; background: #f4f4f4; }
.spin button { display: grid; place-items: center; border: 1px solid #bbb; }
.spin button::before { content: ""; border: solid transparent; border-width: 0 3px 3px; border-bottom-color: #000; }
.spin button:last-child::before { border-width: 3px 3px 0; border-top-color: #000; }
.counter .spin button { opacity: .65; }
.playback label { padding: 0 5px 0 6px; }
#repeat { appearance: none; width: 38px; height: 21px; padding: 0 0 0 3px; border: 1px solid #ccc; color: #777; opacity: 1; background: linear-gradient(45deg, transparent 45%, #aaa 45% 55%, transparent 55%) 24px 8px / 5px 5px no-repeat, linear-gradient(-45deg, transparent 45%, #aaa 45% 55%, transparent 55%) 28px 8px / 5px 5px no-repeat, linear-gradient(90deg, #f0f0f0 18px, #fff 18px); }
.time-label { padding: 0 6px; }
.beat { width: 40px; height: 25px; margin-left: 4px; border: 1px solid #777; border-radius: 2px; background: linear-gradient(#e9e9e9, #bfbfbf); display: grid; place-items: center; }
.beat svg { width: 28px; height: 20px; }

/* Workspace */
.main { display: flex; flex: 1; min-height: 0; }
.palettes { display: flex; align-items: flex-start; width: 73px; flex: none; gap: 1px; }
.palette { display: flex; flex-direction: column; width: 36px; padding: 8px 2px 0 0; background: linear-gradient(#fff 2px, #a0a0a0 2px 3px, #fff 3px 5px, #a0a0a0 5px 6px, #d9d6d3 6px); border: solid #a0a0a0; border-width: 0 1px 1px 0; }
.palette button { display: grid; place-items: center; height: 30px; }
.palette svg { width: 24px; height: 24px; }
.half { font: 16px/24px "Open Sans", sans-serif; }
.document { display: flex; flex: 1; min-width: 0; }
.canvas { flex: 1; min-width: 0; overflow: hidden; padding: 23px 0 0 48px; border-top: 2px solid #6e6e6e; border-left: 1px solid #6e6e6e; background: linear-gradient(#c8c6c8, #9c9c9c); }
.page { position: relative; width: 817px; max-width: 90%; height: 1056px; border: 1px solid #000; background: #fffff7; }
.paper { position: absolute; inset: 0; width: 100%; height: 100%; }
.system { position: relative; display: flex; align-items: center; gap: 20px; padding: 136px 0 0 60px; }
.instrument { width: 63px; flex: none; padding-top: 2px; white-space: nowrap; font: 16px/20px "Liberation Serif", serif; }
.score { width: 630px; height: 90px; flex: none; }
.meter { font: bold 18px "DejaVu Serif", serif; }

.vscroll { display: flex; flex-direction: column; width: 20px; padding-left: 3px; flex: none; background: linear-gradient(90deg, #fff 3px, #f0f0f0 3px); }
.vscroll button { height: 16px; display: grid; place-items: center; }
.vscroll svg, .hscroll svg { width: 10px; height: 10px; fill: none; stroke: #555; stroke-width: 2; }
.vthumb { height: 58%; background: #cdcdcd; }
.down { margin-top: auto; }

/* Page navigation and status */
.pagebar { display: flex; align-items: center; height: 23px; flex: none; padding: 2px 20px 1px 73px; background: linear-gradient(90deg, #fff 73px, #f0f0f0 73px); border-bottom: 1px solid #d5d5d5; }
.layers { display: flex; gap: 2px; font-size: 13px; }
.layers button { width: 10px; height: 18px; border: 1px solid #adadad; background: #e1e1e1; }
.layers .current { border-color: #0078d7; background: #cce4f7; }
.pagebar label { padding: 0 7px 0 14px; }
.nav { display: grid; place-items: center; width: 13px; height: 18px; margin: 0 1px; background: #ccc; }
.nav svg { width: 10px; height: 12px; fill: #555; }
#page { width: 69px; height: 20px; padding: 0 6px; border: 1px solid #777; background: #fff; }
.hscroll { display: flex; flex: 1; height: 18px; margin-left: 6px; }
.hscroll button { width: 17px; display: grid; place-items: center; }
.hthumb { flex: 1; background: #cdcdcd; }
.statusbar { display: flex; height: 18px; flex: none; background: #f0f0f0; padding-left: 2px; line-height: 19px; }
.hint { flex: 1; white-space: nowrap; }
.key { padding: 0 4px; border-right: 1px solid #d0d0d0; }
.key.last { width: 26px; }

/* Taskbar */
.taskbar { display: flex; height: 40px; flex: none; background: linear-gradient(90deg, #203640, #21363f 55%, #1b2b42 80%, #182440); color: #fff; }
.start { display: grid; place-items: center; width: 48px; }
.search { display: flex; align-items: center; gap: 10px; width: 343px; padding-left: 11px; border: 1px solid #bbb; background: #f1f1f1; }
.search input { flex: 1; min-width: 0; padding: 0; border: 0; background: none; font: 14px/20px "Open Sans", sans-serif; }
.search input::placeholder { color: #444; opacity: 1; }
.task { display: grid; place-items: center; width: 49px; flex: none; }
.task svg { width: 24px; height: 24px; }
.separator { width: 3px; height: 16px; margin: auto 9px; border: solid #58666d; border-width: 0 1px; }
.open { background: linear-gradient(#add8f7, #add8f7) center bottom / 40px 2px no-repeat; }
.active { background: linear-gradient(#add8f7, #add8f7) center bottom / 49px 2px no-repeat, #4e6069; }
.x3 { width: 24px; height: 24px; background: #a8a8a8; font: 12px/24px Inter, sans-serif; }
.tray { display: flex; align-items: center; margin-left: auto; height: 40px; }
.tray button { display: grid; place-items: center; width: 24px; height: 40px; }
.tray .help { width: 30px; }
.clock { display: grid; width: 66px; line-height: 18px; text-align: center; }
.tray .notify { width: 40px; margin: 0 8px 0 0; }
.tray .show-desktop { width: 5px; border-left: 1px solid #687487; }
```
